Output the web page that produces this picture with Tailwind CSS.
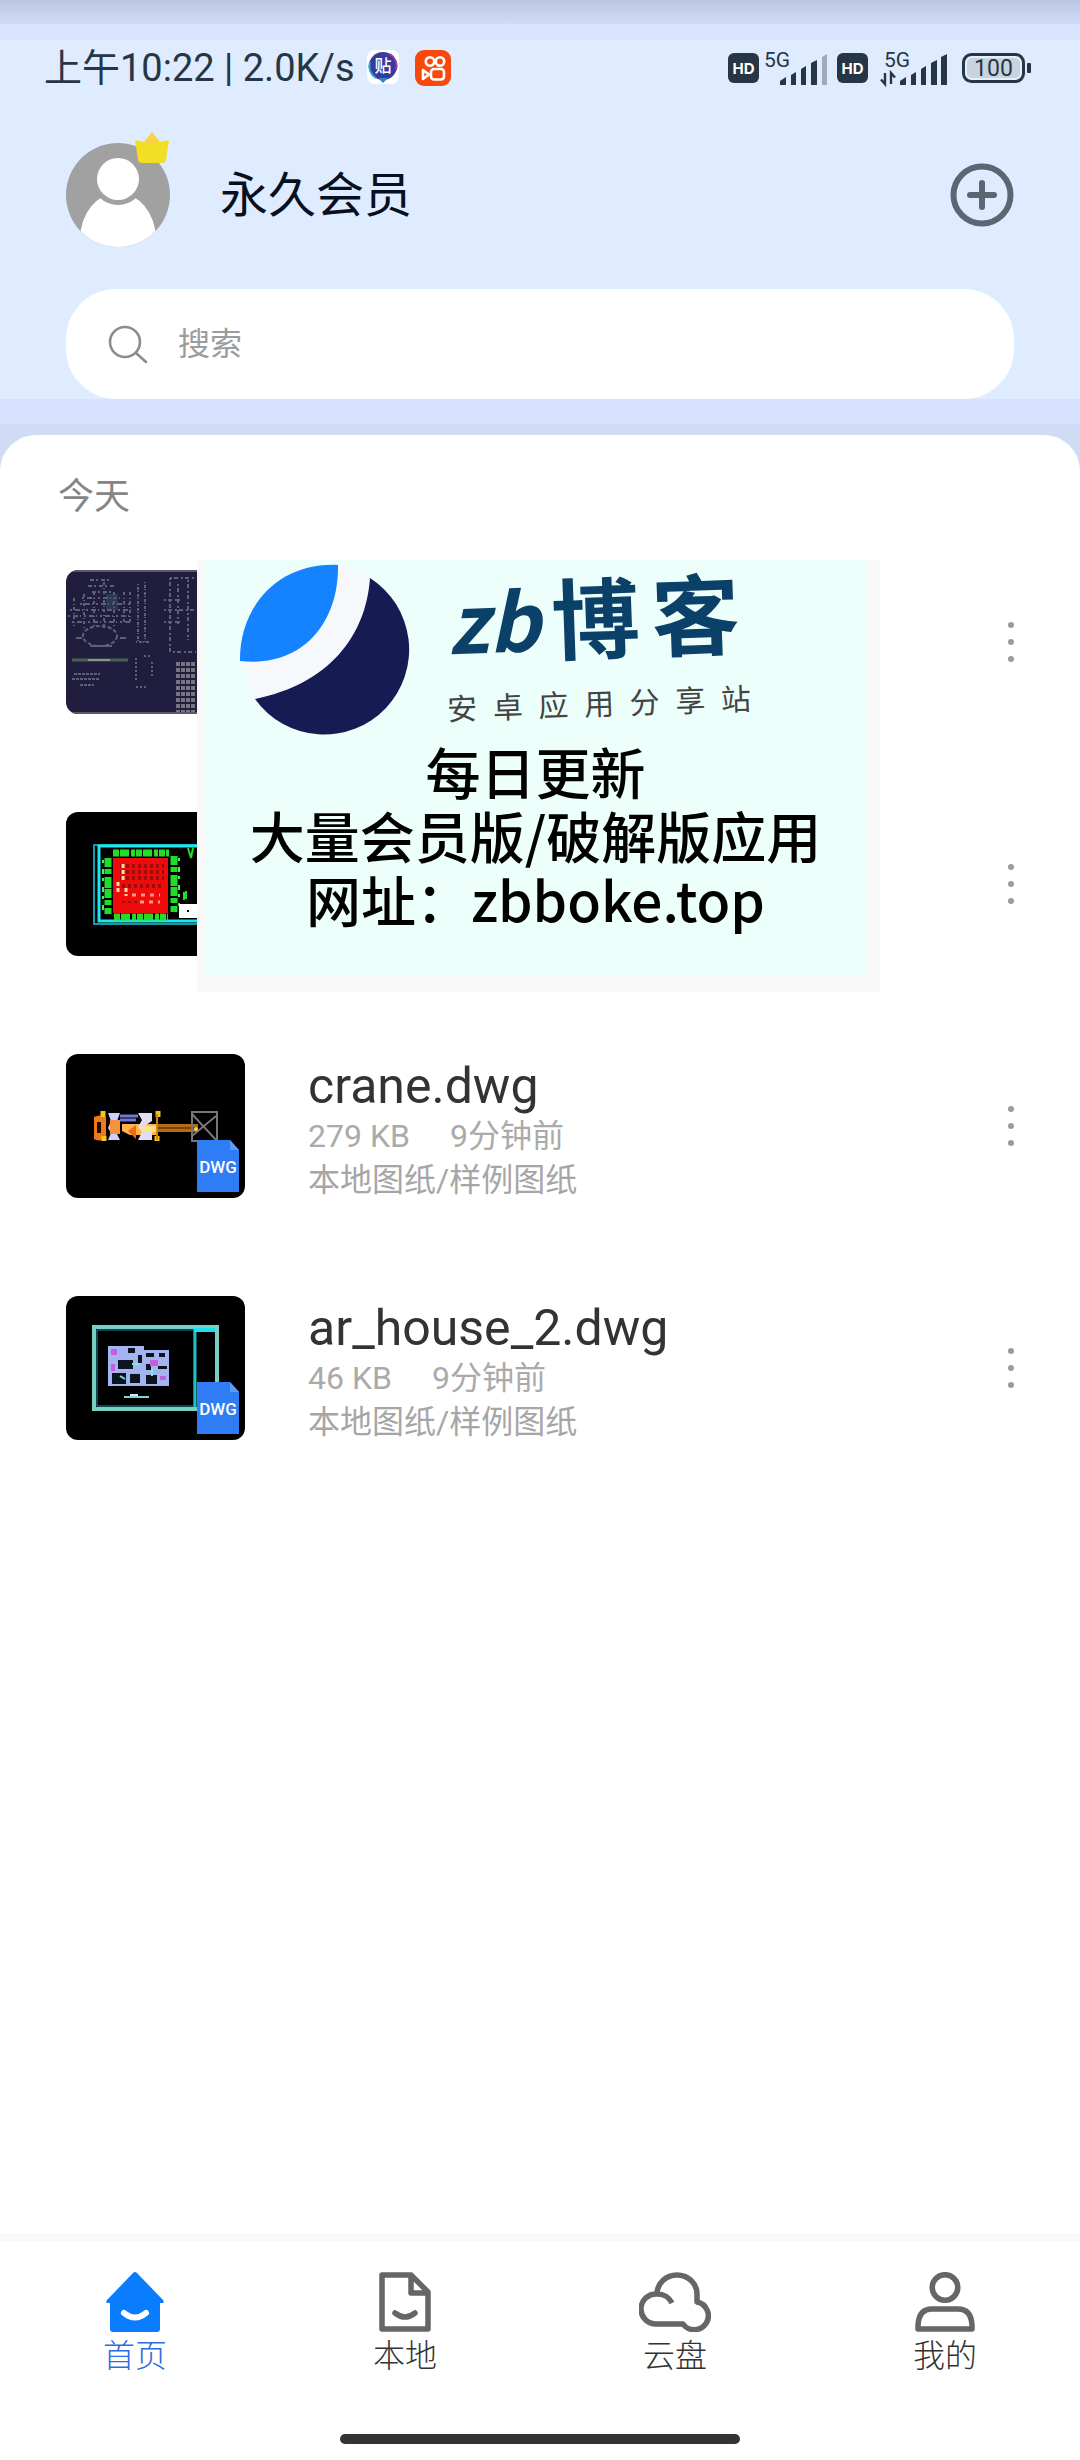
<!DOCTYPE html>
<html lang="zh-CN">
<head>
    <meta charset="UTF-8">
    <meta name="viewport" content="width=device-width, initial-scale=1.0">
    <title>首页</title>
    <script src="https://cdn.jsdelivr.net/npm/@tailwindcss/browser@4"></script>
</head>
<body class="min-h-screen flex flex-col bg-white font-[Roboto,'Noto_Sans_CJK_SC',sans-serif]">

    <header class="bg-[#dfebfe]">
        <div class="h-6 bg-linear-to-b from-[#bac5df] to-[#d0dcf6]"></div>
        <div class="h-4 bg-[#d8e4fe]"></div>

        <!-- Status bar -->
        <div class="flex items-center justify-between h-14 pl-11 pr-12 text-[#263645]">
            <div class="flex items-center">
                <span class="text-[38px] leading-14 font-normal whitespace-pre">上午10:22 | 2.0K/s</span>
                <svg class="ml-3 w-8 h-9" viewBox="0 0 32 36">
                    <rect width="32" height="34" rx="8" fill="#fff"/>
                    <circle cx="16" cy="16" r="14" fill="#3a3a9c"/>
                    <path d="M11 28h10l-5 5z" fill="#2a86c8"/>
                    <path d="M3 12A14 14 0 0 0 9 28" fill="none" stroke="#2a9bd8" stroke-width="2"/>
                    <path d="M23 4A14 14 0 0 1 29 20" fill="none" stroke="#a03aa8" stroke-width="2"/>
                    <text x="16" y="22" text-anchor="middle" font-size="17" font-weight="500" fill="#fff" font-family="Noto Sans CJK SC">贴</text>
                </svg>
                <svg class="ml-4 w-9 h-9" viewBox="0 0 36 36">
                    <rect width="36" height="36" rx="9" fill="#f8480c"/>
                    <g fill="none" stroke="#fff" stroke-width="2.6" stroke-linejoin="round">
                        <circle cx="15" cy="11.5" r="4.2"/>
                        <circle cx="25" cy="11.5" r="4.2"/>
                        <rect x="16" y="19" width="13" height="10.5" rx="3"/>
                        <path d="M8 20l6 4.500-6 4.500z"/>
                    </g>
                </svg>
            </div>
            <div class="flex items-center">
                <svg class="w-[31px] h-[30px]" viewBox="0 0 31 30">
                    <rect width="31" height="30" rx="6" fill="#263645"/>
                    <text x="15.5" y="20.5" text-anchor="middle" font-size="15" font-weight="700" fill="#fff" font-family="Inter">HD</text>
                </svg>
                <svg class="ml-1 w-[66px] h-10" viewBox="0 0 66 40">
                    <text x="1" y="19" font-size="21" fill="#263645" font-family="Roboto">5G</text>
                    <g fill="#263645">
                        <path d="M17 37v-4l6-4v8z"/>
                        <path d="M28 37V27l5-3v13z"/>
                        <path d="M38 37V21l5-3v19z"/>
                        <path d="M48 37V15l6-3v25z"/>
                        <path d="M59 37V9l5-3v31z" fill="#9eabbd"/>
                    </g>
                </svg>
                <svg class="ml-2 w-[31px] h-[30px]" viewBox="0 0 31 30">
                    <rect width="31" height="30" rx="6" fill="#263645"/>
                    <text x="15.5" y="20.5" text-anchor="middle" font-size="15" font-weight="700" fill="#fff" font-family="Inter">HD</text>
                </svg>
                <svg class="ml-3 w-[70px] h-10" viewBox="0 0 70 40">
                    <text x="4" y="19" font-size="21" fill="#263645" font-family="Roboto">5G</text>
                    <g fill="#263645">
                        <path d="M5 25v11L1 31.500M11 36V25l4 4.500" fill="none" stroke="#263645" stroke-width="2.4"/>
                        <path d="M20 37v-4l6-4v8z"/>
                        <path d="M31 37V27l5-3v13z"/>
                        <path d="M41 37V21l5-3v19z"/>
                        <path d="M51 37V15l6-3v25z"/>
                        <path d="M61 37V9l6-3v31z"/>
                    </g>
                </svg>
                <svg class="ml-3 w-[70px] h-8" viewBox="0 0 70 32">
                    <rect x="1.5" y="2.5" width="60" height="27" rx="8" fill="#e3effb" stroke="#263645" stroke-width="3"/>
                    <rect x="5" y="6" width="53" height="20" rx="5" fill="#c8d3df"/>
                    <rect x="65" y="11" width="4" height="10" rx="1" fill="#263645"/>
                    <text x="31.5" y="24" text-anchor="middle" font-size="23" fill="#263645" font-family="Roboto">100</text>
                </svg>
            </div>
        </div>

        <!-- Profile -->
        <div class="flex items-center mt-[35px] px-[66px]">
            <svg class="w-[104px] h-[116px]" viewBox="0 0 104 116">
                <clipPath id="avatar"><circle cx="52" cy="64" r="52"/></clipPath>
                <g clip-path="url(#avatar)">
                    <rect width="104" height="116" fill="#a1a1a1"/>
                    <ellipse cx="52" cy="108" rx="38" ry="46" fill="#fff"/>
                    <circle cx="52" cy="48" r="26" fill="#a1a1a1"/>
                    <circle cx="52" cy="48" r="21" fill="#fff"/>
                </g>
                <path d="M69 9l9 2 8-10 8 10 9-2-3 20q-1 3-4 3H76q-3 0-4-3z" fill="#f2df25"/>
                <path d="M86 1l6 9-6 4-6-4z" fill="#fbd04a"/>
            </svg>
            <h1 class="ml-[50px] pt-3.5 flex-1 text-[48px] leading-14 text-[#07101e]">永久会员</h1>
            <button type="button" aria-label="新建" class="pt-3">
                <svg class="w-16 h-16" viewBox="0 0 64 64" fill="none" stroke="#596773" stroke-width="6" stroke-linecap="round">
                    <circle cx="32" cy="32" r="28.5"/>
                    <path d="M20 32h24M32 20v24"/>
                </svg>
            </button>
        </div>

        <div class="mt-[42px] px-[66px]">
            <label class="flex items-center h-[110px] rounded-[50px] bg-white px-[42px]">
                <svg class="w-10 h-10" viewBox="0 0 40 40" fill="none" stroke="#8c8c8c" stroke-width="2.6" stroke-linecap="round">
                    <circle cx="17" cy="18" r="15"/>
                    <path d="M28 29l10 9"/>
                </svg>
                <input type="search" placeholder="搜索" class="ml-[30px] flex-1 text-[32px] leading-10 outline-none placeholder:text-[#9c9c9c]">
            </label>
        </div>
        <div class="h-[25px] bg-[#d7e3fe]"></div>
        <div class="h-[51px] bg-[#d0dcf4]"></div>
    </header>

    <main class="relative flex-1 -mt-10 rounded-t-[36px] bg-white pt-[34px] px-[66px]">
        <h2 class="-ml-2 text-[36px] leading-14 text-[#858585]">今天</h2>

        <ul class="mt-[45px] flex flex-col gap-[98px]">
            <li class="flex items-center h-36">
                <svg class="w-[179px] h-36 rounded-xl" viewBox="0 0 179 144">
                    <rect width="179" height="144" fill="#211d3f"/>
                    <path d="M0 1h179M0 143h179" stroke="#5a5965" stroke-width="2"/>
                    <g fill="none" stroke="#5b6276" stroke-width="2">
                        <path d="M24 10h22M22 16h26M26 22h20" stroke-dasharray="4 2 2 3"/>
                        <path d="M16 28h38M14 34h52M4 40h62M2 46h64M6 52h60" stroke-dasharray="2 3 5 2 1 3"/>
                        <path d="M8 28v28M18 24v34M28 22v36M38 12v46M48 22v36M58 22v32M64 22v32" stroke-dasharray="3 3 1 2"/>
                        <path d="M72 14v58M79 12v60M70 72h14" stroke-dasharray="1 2 3 1"/>
                        <ellipse cx="34" cy="66" rx="17" ry="10" stroke-dasharray="4 2"/>
                        <path d="M10 68h6M54 68h6M24 76h22"/>
                        <path d="M104 8h26M104 8v74h26M98 30h16M98 40h30M98 52h16M112 14v40M122 10v60" stroke-dasharray="2 2 4 3"/>
                        <path d="M8 104h26M6 109h28M14 115h14" stroke-dasharray="3 1"/>
                        <path d="M70 88v22M78 86h8M86 92v16M70 117h12" stroke-dasharray="2 2"/>
                    </g>
                    <path d="M40 24h12v16H40z" fill="#3f6573" opacity=".4"/>
                    <path d="M6 90h56" stroke="#48604f" stroke-width="3"/>
                    <path d="M22 90h22" stroke="#8b9590" stroke-width="2"/>
                    <path d="M112 92v50M117 92v50M122 92v50M127 92v50" stroke="#77767e" stroke-width="4" stroke-dasharray="4 2"/>
                </svg>
                <button type="button" aria-label="更多" class="-mr-2 ml-auto">
                    <svg class="w-6 h-11" viewBox="0 0 24 44" fill="#9b9b9b"><circle cx="13" cy="5" r="3"/><circle cx="13" cy="22" r="3"/><circle cx="13" cy="39" r="3"/></svg>
                </button>
            </li>

            <li class="flex items-center h-36">
                <svg class="w-[179px] h-36 rounded-xl" viewBox="0 0 179 144">
                    <rect width="179" height="144"/>
                    <rect x="28" y="33" width="140" height="79" fill="none" stroke="#149aa8" stroke-width="2"/>
                    <rect x="33" y="34" width="140" height="75" fill="none" stroke="#1ce6ee" stroke-width="3"/>
                    <g fill="none" stroke="#22dd28" stroke-width="7">
                        <path d="M47 41h56M48 105h54" stroke-dasharray="6 1 9 2 4 1"/>
                        <path d="M42 46v56M108 44v56" stroke-dasharray="9 2 5 3 11 1"/>
                    </g>
                    <path d="M37 48v50M113 46v48" stroke="#45f25f" stroke-width="2" stroke-dasharray="3 6 5 4"/>
                    <path d="M122 36l3 10 2-10M118 80v8M120 79v8" fill="none" stroke="#22dd28" stroke-width="2"/>
                    <rect x="47" y="46" width="55" height="55" fill="#f00b0b"/>
                    <g stroke="#a00b0b" stroke-width="4" stroke-dasharray="3 3">
                        <path d="M54 54h44M54 60h44M54 66h44M56 74h42"/>
                        <path d="M56 90h20" stroke-width="2"/>
                    </g>
                    <path d="M57 52v17M52 70v10M60 76v8" stroke="#ffd9b0" stroke-width="3" stroke-dasharray="4 2"/>
                    <path d="M66 83h28M74 90h20" stroke="#ff9a8a" stroke-width="3" stroke-dasharray="4 5"/>
                    <path d="M113 92h20v14h-20z" fill="#fff"/>
                    <path d="M121 99h2" stroke="#000" stroke-width="2"/>
                </svg>
                <button type="button" aria-label="更多" class="-mr-2 ml-auto">
                    <svg class="w-6 h-11" viewBox="0 0 24 44" fill="#9b9b9b"><circle cx="13" cy="5" r="3"/><circle cx="13" cy="22" r="3"/><circle cx="13" cy="39" r="3"/></svg>
                </button>
            </li>

            <li class="flex items-center h-36">
                <svg class="w-[179px] h-36 rounded-xl" viewBox="0 0 179 144">
                    <rect width="179" height="144"/>
                    <path d="M90 70h42v8H90z" fill="#b86a10"/>
                    <path d="M90 74h42" stroke="#7c4308" stroke-width="2"/>
                    <path d="M28 63q5-3 12 0v22q-7 3-12 0z" fill="#f07818"/>
                    <path d="M31 68h4v11h-4z" fill="#140800"/>
                    <path d="M42 59h12l-3 8 3 8-3 5 3 6H42l3-7-3-5 3-7z" fill="#cdd0f8"/>
                    <path d="M44 66h10v14H44z" fill="#f5923a"/>
                    <path d="M54 62h18M54 66h16" stroke="#6e78d8" stroke-width="3"/>
                    <path d="M56 70h34v11H64l-8-4z" fill="#ffb648"/>
                    <path d="M62 77l8-6v14z" fill="#f06a10"/>
                    <path d="M72 59h14v8l-6 4 6 6v9H72l4-8-4-5 4-7z" fill="#dfdcf4"/>
                    <path d="M76 72h15v6H76z" fill="#ffe08a"/>
                    <path d="M37 57v6M92 57v6M38 82v5M91 82v5" stroke="#f5c51c" stroke-width="5"/>
                    <path d="M91 60v26" stroke="#d8820e" stroke-width="2"/>
                    <path d="M126 58h25v29h-25zM126 60l24 26M150 62l-24 20" fill="none" stroke="#777575" stroke-width="2"/>
                    <circle cx="130" cy="75" r="2" fill="#f5d06a"/>
                    <path d="M131 86h33l9 10v42h-42z" fill="#2f7df4"/>
                    <path d="M164 86v10h9z" fill="#5b9bff"/>
                    <text x="152" y="119" text-anchor="middle" font-size="17" font-weight="500" fill="#fff" font-family="Roboto">DWG</text>
                </svg>
                <div class="ml-[63px] flex-1 pt-2">
                    <h3 class="text-[50px] leading-14 text-[#333]">crane.dwg</h3>
                    <p class="flex gap-10 text-[32px] leading-11 text-[#aaa]"><span>279 KB</span><span>9分钟前</span></p>
                    <p class="text-[32px] leading-11 text-[#a6a6a6]">本地图纸/样例图纸</p>
                </div>
                <button type="button" aria-label="更多" class="-mr-2 ml-auto">
                    <svg class="w-6 h-11" viewBox="0 0 24 44" fill="#9b9b9b"><circle cx="13" cy="5" r="3"/><circle cx="13" cy="22" r="3"/><circle cx="13" cy="39" r="3"/></svg>
                </button>
            </li>

            <li class="flex items-center h-36">
                <svg class="w-[179px] h-36 rounded-xl" viewBox="0 0 179 144">
                    <rect width="179" height="144"/>
                    <path d="M28 31h123v82H28z" fill="none" stroke="#79cfc4" stroke-width="4"/>
                    <path d="M31 34h97v76H31z" fill="none" stroke="#1a8fa0" stroke-width="1"/>
                    <path d="M129 33v78" stroke="#1cc0c4" stroke-width="3"/>
                    <path d="M128 34h21" stroke="#1ee0ea" stroke-width="4"/>
                    <path d="M42 50h36v4h25v36H42z" fill="#a3b4f0"/>
                    <g fill="#0c1420">
                        <path d="M52 64h15v9H52zM46 77h14v11H46zM64 78h10v9H64zM80 79h11v9H80z"/>
                        <path d="M62 52h7v5h-7zM80 57h8v4h-8zM93 57h6v4h-6zM72 59h4v8h-4zM80 68h5v6h-5zM92 70h9v3h-9z"/>
                    </g>
                    <path d="M45 53h6v6h-6zM45 68h4v7h-4zM84 64h8v6h-8zM94 80h6v4h-6z" fill="#c060e0"/>
                    <path d="M54 80l5 3M66 68h8M86 72v8" stroke="#7fe8d8" stroke-width="2"/>
                    <path d="M58 101h25" stroke="#8fd0d0" stroke-width="2"/>
                    <path d="M64 99h8" stroke="#c8f0f0" stroke-width="2"/>
                    <path d="M131 86h33l9 10v42h-42z" fill="#2f7df4"/>
                    <path d="M164 86v10h9z" fill="#5b9bff"/>
                    <text x="152" y="119" text-anchor="middle" font-size="17" font-weight="500" fill="#fff" font-family="Roboto">DWG</text>
                </svg>
                <div class="ml-[63px] flex-1 pt-2">
                    <h3 class="text-[50px] leading-14 text-[#333]">ar_house_2.dwg</h3>
                    <p class="flex gap-10 text-[32px] leading-11 text-[#aaa]"><span>46 KB</span><span>9分钟前</span></p>
                    <p class="text-[32px] leading-11 text-[#a6a6a6]">本地图纸/样例图纸</p>
                </div>
                <button type="button" aria-label="更多" class="-mr-2 ml-auto">
                    <svg class="w-6 h-11" viewBox="0 0 24 44" fill="#9b9b9b"><circle cx="13" cy="5" r="3"/><circle cx="13" cy="22" r="3"/><circle cx="13" cy="39" r="3"/></svg>
                </button>
            </li>
        </ul>

        <!-- Floating banner -->
        <aside class="absolute top-[125px] left-[197px] w-[683px] h-[432px] bg-[#ecfffa] border-r-[14px] border-b-[16px] border-l-8 border-[#f8f8f8] font-['Noto_Sans_CJK_SC',sans-serif] text-black">
            <div class="flex h-[178px] pl-[34px]">
                <svg class="mt-1 w-[172px] h-[172px]" viewBox="0 0 172 172">
                    <path d="M99 1L131 14C127 72 90 120 16 135L1 97z" fill="#f7f8fc"/>
                    <path d="M131 14A85 85 0 1 1 16 135C90 120 127 72 131 14z" fill="#171b54"/>
                    <path d="M99 1C40-2 0 42 1 97C62 104 100 60 99 1z" fill="#1583ff"/>
                </svg>
                <div class="ml-9 flex flex-col">
                    <p class="h-[108px] flex items-center gap-3 font-bold text-[#0b4068] leading-[108px] -rotate-2">
                        <span class="text-[80px] italic">zb</span><span class="text-[88px]">博</span><span class="text-[88px]">客</span>
                    </p>
                    <p class="mt-4 w-[304px] flex justify-between text-[30px] leading-9 text-[#444] -rotate-2">
                        <span>安</span><span>卓</span><span>应</span><span>用</span><span>分</span><span>享</span><span>站</span>
                    </p>
                </div>
            </div>
            <p class="text-center text-[55px] leading-16 font-medium">每日更新<br>大量会员版/破解版应用<br>网址：zbboke.top</p>
        </aside>
    </main>

    <!-- Tab bar -->
    <nav class="border-t-8 border-[#f9f9f9] pt-[31px] pb-4">
        <div class="grid grid-cols-4 text-[32px] leading-12 font-light text-[#333]">
            <a href="#" class="flex flex-col items-center text-[#2f6be0]">
                <svg class="w-[72px] h-[60px]" viewBox="0 0 72 60">
                    <path d="M34 1q2-2 4 0l26 27q2 3-1 3h-2v26q0 3-3 3H14q-3 0-3-3V31H9q-3 0-1-3z" fill="#0a7dff"/>
                    <path d="M25 41q11 9 22 0" fill="none" stroke="#fff" stroke-width="6" stroke-linecap="round"/>
                </svg>
                首页
            </a>
            <a href="#" class="flex flex-col items-center">
                <svg class="w-[72px] h-[60px]" viewBox="0 0 72 60" fill="none" stroke="#666" stroke-width="5.5" stroke-linejoin="round" stroke-linecap="round">
                    <path d="M13 3h29l17 17v37H13zM42 3v18h17"/>
                    <path d="M26 41q10 8 20 0"/>
                </svg>
                本地
            </a>
            <a href="#" class="flex flex-col items-center">
                <svg class="w-[72px] h-[60px]" viewBox="0 0 72 60" fill="none" stroke="#666" stroke-width="5.5" stroke-linejoin="round">
                    <path d="M33 31A16 16 0 0 0 18 22A15 15 0 0 0 16 52H44A14 14 0 1 0 58 30V22A20 19 0 0 0 18 22"/>
                </svg>
                云盘
            </a>
            <a href="#" class="flex flex-col items-center">
                <svg class="w-[72px] h-[60px]" viewBox="0 0 72 60" fill="none" stroke="#666" stroke-width="5.5" stroke-linejoin="round">
                    <circle cx="36" cy="15.5" r="12.8"/>
                    <path d="M9 57v-4Q10 37 23 37H49Q62 37 63 53v4z"/>
                </svg>
                我的
            </a>
        </div>
        <div class="mt-[54px] mx-auto w-[400px] h-[10px] rounded-full bg-[#333]"></div>
    </nav>
</body>
</html>
